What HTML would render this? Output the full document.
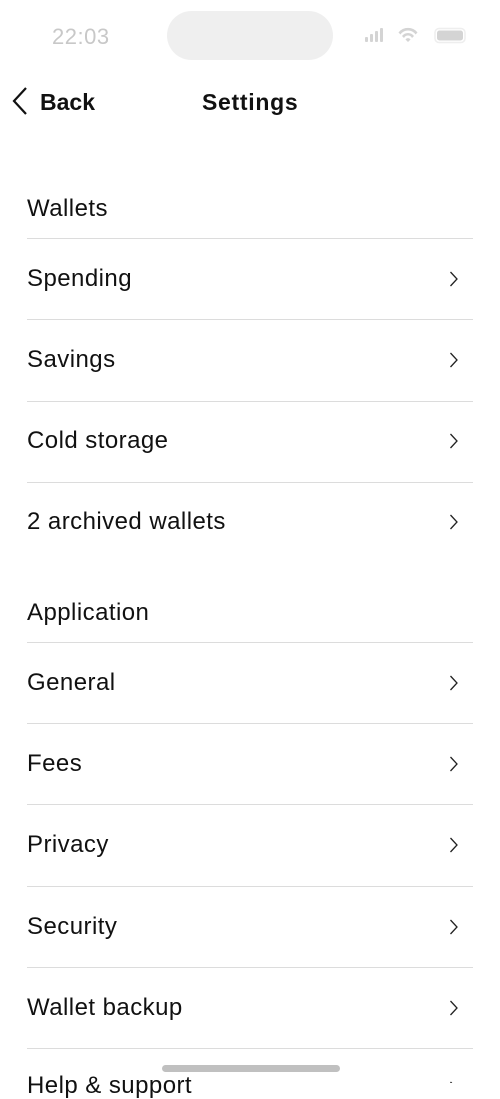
<!DOCTYPE html>
<html><head><meta charset="utf-8"><style>
*{margin:0;padding:0;box-sizing:border-box}
body{width:500px;height:1083px;overflow:hidden;background:#fff;font-family:"Liberation Sans",sans-serif;color:#111;position:relative}
.a{position:absolute}
.t{position:absolute;left:27px;font-size:24px;line-height:26px;letter-spacing:0.45px;white-space:nowrap}
.h{font-weight:500}
.d{position:absolute;left:27px;width:446px;height:1px;background:#dcdcdc}
</style></head><body>
<div class="a" style="left:52px;top:24px;font-size:22px;color:#c8c8c8;font-weight:500;letter-spacing:0.5px">22:03</div>
<div class="a" style="left:167px;top:11px;width:166px;height:49px;border-radius:25px;background:#efefef"></div>
<svg class="a" style="left:362px;top:26px" width="110" height="20" viewBox="0 0 110 20">
<g fill="#d4d4d4"><rect x="3" y="11" width="3" height="5" rx="1"/><rect x="8" y="8" width="3" height="8" rx="1"/><rect x="13" y="5" width="3" height="11" rx="1"/><rect x="18" y="2" width="3" height="14" rx="1"/>
<path d="M36.5 6.5a12 12 0 0 1 19 0l-2 2a9 9 0 0 0-15 0z"/><path d="M40 10a7.5 7.5 0 0 1 12 0l-2 2a4.5 4.5 0 0 0-8 0z"/><path d="M43.5 13.5a3 3 0 0 1 5 0l-2.5 2.5z"/>
<rect x="73" y="2.5" width="30" height="14" rx="4" fill="none" stroke="#eee" stroke-width="1.5"/><rect x="75" y="4.5" width="26" height="10" rx="2.5"/></g></svg>
<svg class="a" style="left:10px;top:86px" width="20" height="32"><path d="M16 2 L4 15 L16 28" fill="none" stroke="#111" stroke-width="2.2"/></svg>
<div class="a" style="left:40px;top:89px;font-size:23px;font-weight:bold">Back</div>
<div class="a" style="left:202px;top:89px;font-size:23px;font-weight:bold;letter-spacing:0.7px">Settings</div>

<div class="t h" style="top:196px">Wallets</div>
<div class="d" style="top:238px"></div>
<div class="t" style="top:266px">Spending</div>
<div class="d" style="top:319px"></div>
<div class="t" style="top:347px">Savings</div>
<div class="d" style="top:401px"></div>
<div class="t" style="top:428px">Cold storage</div>
<div class="d" style="top:482px"></div>
<div class="t" style="top:509px">2 archived wallets</div>

<div class="t h" style="top:600px">Application</div>
<div class="d" style="top:642px"></div>
<div class="t" style="top:670px">General</div>
<div class="d" style="top:723px"></div>
<div class="t" style="top:751px">Fees</div>
<div class="d" style="top:804px"></div>
<div class="t" style="top:832px">Privacy</div>
<div class="d" style="top:886px"></div>
<div class="t" style="top:914px">Security</div>
<div class="d" style="top:967px"></div>
<div class="t" style="top:995px">Wallet backup</div>
<div class="d" style="top:1048px"></div>
<div class="t" style="top:1073px">Help &amp; support</div>

<svg class="a" style="left:0;top:0" width="500" height="1083">
<g fill="none" stroke="#222" stroke-width="1.3">
<path d="M450.5 272l6.5 7-6.5 7"/><path d="M450.5 353l6.5 7-6.5 7"/><path d="M450.5 434l6.5 7-6.5 7"/><path d="M450.5 515l6.5 7-6.5 7"/>
<path d="M450.5 676l6.5 7-6.5 7"/><path d="M450.5 757l6.5 7-6.5 7"/><path d="M450.5 838l6.5 7-6.5 7"/><path d="M450.5 920l6.5 7-6.5 7"/><path d="M450.5 1001l6.5 7-6.5 7"/><path d="M450.5 1082l6.5 7-6.5 7"/>
</g>
<rect x="162" y="1065" width="178" height="7" rx="3.5" fill="#c0c0c0"/>
</svg>
</body></html>
